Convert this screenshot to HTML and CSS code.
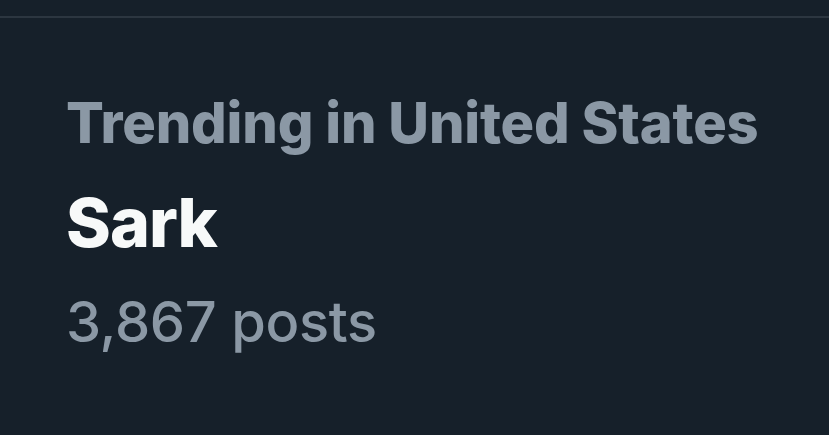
FILE: index.html
```html
<!DOCTYPE html>
<html>
<head>
<meta charset="utf-8">
<link rel="stylesheet" href="styles.css">
</head>
<body>
<div class="page">
  <div class="divider"></div>
  <div class="trend">
    <div class="context">Trending in United States</div>
    <div class="topic">Sark</div>
    <div class="count">3,867 posts</div>
  </div>
</div>
</body>
</html>
```
FILE: styles.css
```css
html, body {
  margin: 0;
  padding: 0;
  background: #16202a;
}
.page {
  width: 829px;
  height: 435px;
  padding-top: 16px;
  box-sizing: border-box;
  font-family: Inter, "Liberation Sans", Arial, sans-serif;
}
.divider {
  height: 2px;
  background: #2c3640;
}
.trend {
  padding: 73px 0 0 66px;
  display: flex;
  flex-direction: column;
}
.context {
  color: #8b98a5;
  font-weight: 800;
  font-size: 56px;
  line-height: 64px;
  letter-spacing: -0.2px;
}
.topic {
  margin-top: 22px;
  color: #f7f9f9;
  font-weight: 800;
  font-size: 68px;
  line-height: 90px;
  letter-spacing: -1px;
}
.count {
  margin-top: 15px;
  color: #8b98a5;
  font-weight: 500;
  font-size: 56px;
  line-height: 80px;
  letter-spacing: -0.3px;
}
```
